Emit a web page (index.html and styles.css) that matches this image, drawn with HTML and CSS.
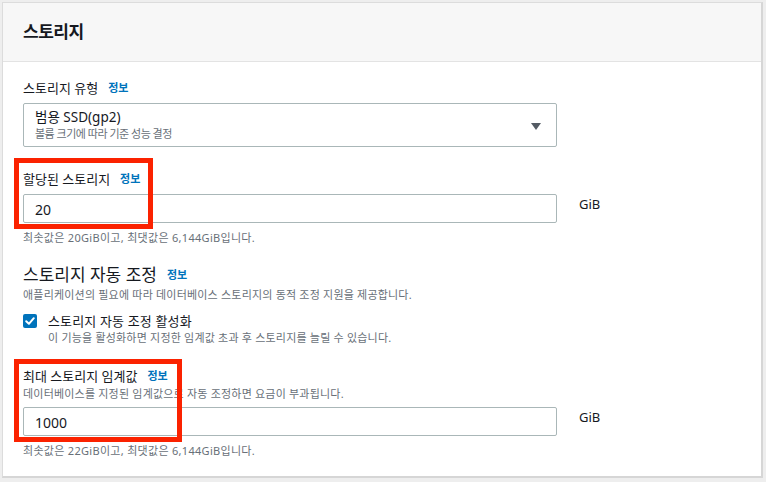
FILE: index.html
```html
<!DOCTYPE html>
<html lang="ko">
<head>
<meta charset="utf-8">
<link rel="stylesheet" href="styles.css">
</head>
<body>
<div class="card">
  <div class="card-header"><h2 class="title">스토리지</h2></div>
  <div class="card-body">
    <div class="label label-first">스토리지 유형 <a class="info">정보</a></div>
    <div class="select">
      <div class="select-text">
        <div class="select-main">범용 SSD(gp2)</div>
        <div class="select-sub">볼륨 크기에 따라 기준 성능 결정</div>
      </div>
      <svg class="caret" width="10" height="7" viewBox="0 0 10 7"><path d="M0 0 H10 L5 7 Z" fill="#545b64"/></svg>
    </div>

    <div class="label label-gap">할당된 스토리지 <a class="info">정보</a></div>
    <div class="input-row">
      <div class="input">20</div>
      <span class="unit">GiB</span>
    </div>
    <div class="hint">최솟값은 20GiB이고, 최댓값은 6,144GiB입니다.</div>

    <div class="subhead">스토리지 자동 조정 <a class="info">정보</a></div>
    <div class="desc">애플리케이션의 필요에 따라 데이터베이스 스토리지의 동적 조정 지원을 제공합니다.</div>

    <div class="check-row">
      <span class="checkbox"><svg width="14" height="14" viewBox="0 0 14 14"><path d="M3.2 7.2 L5.9 9.8 L10.8 4.2" fill="none" stroke="#fff" stroke-width="2" stroke-linecap="round" stroke-linejoin="round"/></svg></span>
      <div class="check-text">
        <div class="check-label">스토리지 자동 조정 활성화</div>
        <div class="desc">이 기능을 활성화하면 지정한 임계값 초과 후 스토리지를 늘릴 수 있습니다.</div>
      </div>
    </div>

    <div class="label label-gap2">최대 스토리지 임계값 <a class="info">정보</a></div>
    <div class="desc">데이터베이스를 지정된 임계값으로 자동 조정하면 요금이 부과됩니다.</div>
    <div class="input-row">
      <div class="input">1000</div>
      <span class="unit">GiB</span>
    </div>
    <div class="hint hint-last">최솟값은 22GiB이고, 최댓값은 6,144GiB입니다.</div>
  </div>
  <div class="highlight highlight-1"></div>
  <div class="highlight highlight-2"></div>
</div>
</body>
</html>
```

FILE: styles.css
```css
html, body {
  margin: 0;
  padding: 0;
}
body {
  background: #eeeeee;
  padding: 2px 3px 0 2px;
  font-family: "Noto Sans", "Noto Sans CJK KR", sans-serif;
  color: #16191f;
}
.card {
  position: relative;
  background: #ffffff;
  border: 1px solid #dcdcdc;
  border-right: 2px solid #d6d6d6;
  border-bottom: 2px solid #d6d6d6;
  height: 473px;
  box-sizing: content-box;
}
.card-header {
  background: #f7f7f7;
  border-bottom: 1px solid #e3e3e3;
  height: 58px;
  display: flex;
  align-items: center;
  padding-left: 20px;
}
.title {
  margin: 0;
  font-size: 17px;
  font-weight: 700;
  line-height: 24px;
  letter-spacing: -0.5px;
}
.card-body {
  padding: 16px 20px 0 20px;
  display: flex;
  flex-direction: column;
  align-items: flex-start;
}
.label {
  font-size: 13px;
  line-height: 20px;
  letter-spacing: 0;
  display: flex;
  align-items: center;
}
.info {
  color: #0073bb;
  font-size: 11px;
  font-weight: 700;
  margin-left: 10px;
  letter-spacing: -0.1px;
}
.label-gap { margin-top: 22px; }
.label-gap2 { margin-top: 20px; }
.select {
  margin-top: 5px;
  width: 534px;
  height: 44px;
  box-sizing: border-box;
  border: 1px solid #aab7b8;
  border-radius: 2px;
  display: flex;
  align-items: center;
  justify-content: space-between;
  padding: 0 15px 0 11px;
}
.select-main {
  font-size: 13.5px;
  line-height: 17px;
  letter-spacing: 0;
}
.select-sub {
  font-size: 11px;
  line-height: 16px;
  color: #687078;
  letter-spacing: -0.5px;
}
.caret { display: block; margin-top: 3px; }
.input-row {
  margin-top: 5px;
  display: flex;
  align-items: flex-start;
  gap: 22px;
}
.input {
  width: 534px;
  height: 29px;
  box-sizing: border-box;
  border: 1px solid #aab7b8;
  border-radius: 2px;
  padding-left: 11px;
  font-size: 14px;
  line-height: 30px;
}
.unit {
  font-size: 13px;
  line-height: 20px;
}
.hint {
  margin-top: 7px;
  font-size: 11px;
  line-height: 16px;
  color: #687078;
  letter-spacing: 0.3px;
}
.subhead {
  margin-top: 18px;
  font-size: 17px;
  line-height: 22px;
  letter-spacing: 0;
  display: flex;
  align-items: center;
}
.subhead .info { margin-left: 10px; }
.desc {
  font-size: 11px;
  line-height: 16px;
  color: #687078;
  letter-spacing: 0.2px;
}
.subhead + .desc { margin-top: 1px; }
.check-row {
  margin-top: 9px;
  display: flex;
  align-items: flex-start;
  gap: 11px;
}
.checkbox {
  width: 14px;
  height: 14px;
  margin-top: 2px;
  background: #0073bb;
  border-radius: 2px;
  display: flex;
}
.check-label {
  font-size: 13px;
  line-height: 18px;
  letter-spacing: 0.15px;
}
.highlight {
  position: absolute;
  border: 5px solid #fb2200;
  box-sizing: border-box;
  pointer-events: none;
}
.highlight-1 {
  left: 11px;
  top: 155px;
  width: 139px;
  height: 71px;
}
.highlight-2 {
  left: 11px;
  top: 356px;
  width: 168px;
  height: 83px;
}
```
